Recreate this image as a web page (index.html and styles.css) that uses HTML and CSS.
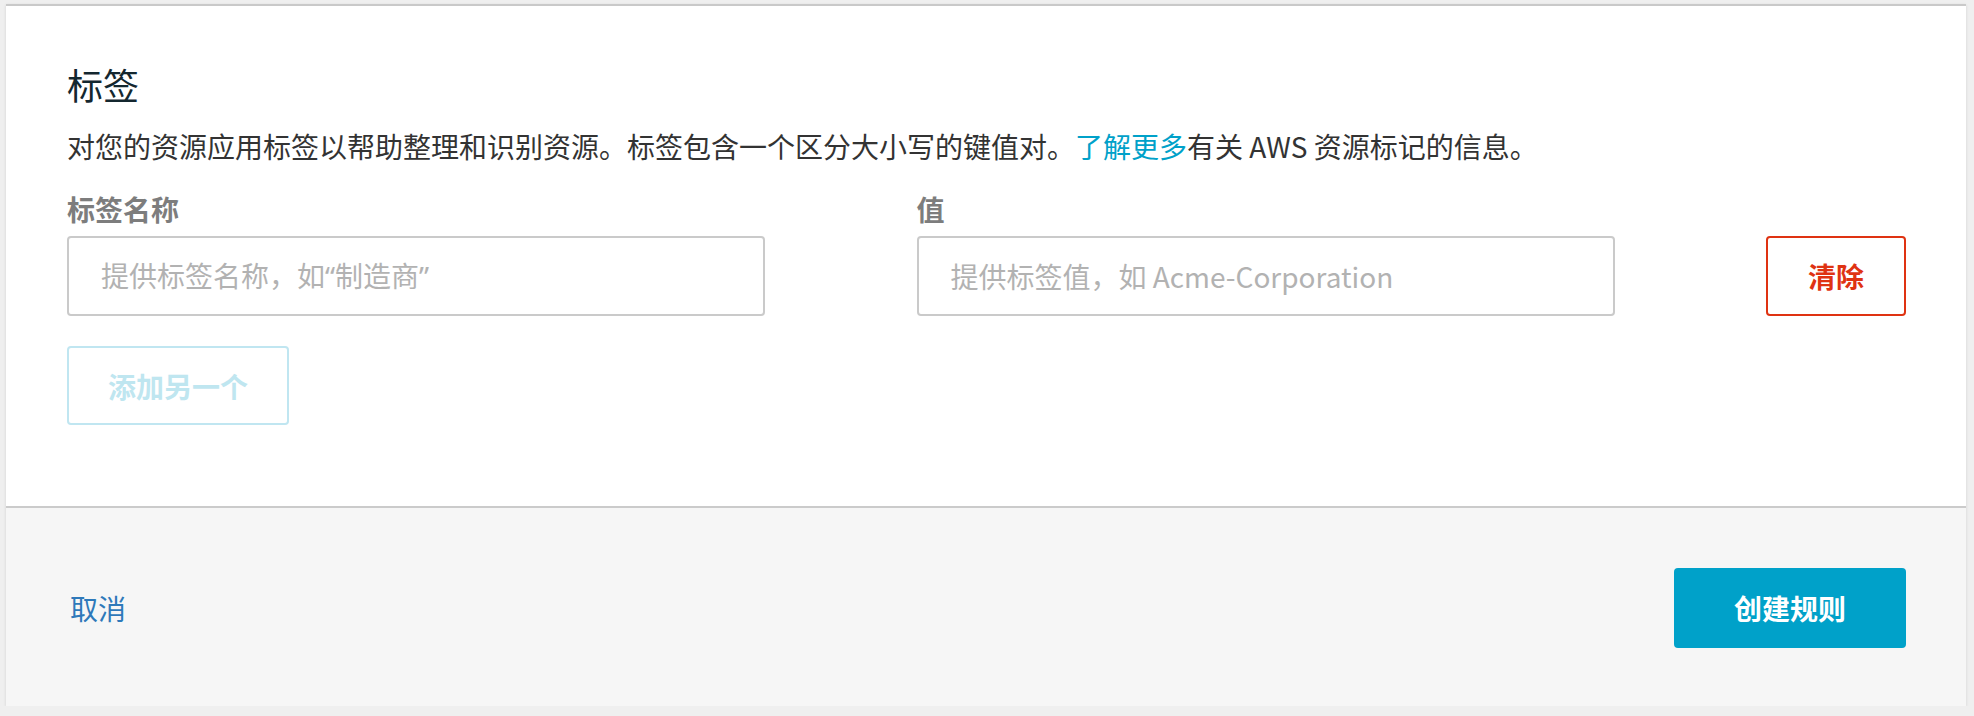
FILE: index.html
```html
<!DOCTYPE html>
<html lang="zh-CN">
<head>
<meta charset="utf-8">
<title>标签</title>
<link rel="stylesheet" href="styles.css">
</head>
<body>
<div class="panel">
  <section class="tags">
    <h2 class="tags-title">标签</h2>
    <p class="tags-desc">对您的资源应用标签以帮助整理和识别资源。标签包含一个区分大小写的键值对。<a class="link" href="#">了解更多</a>有关 AWS 资源标记的信息。</p>
    <div class="tag-row">
      <div class="field">
        <label class="field-label">标签名称</label>
        <input class="field-input field-input-quotes" type="text" placeholder="提供标签名称，如“制造商”">
      </div>
      <div class="field">
        <label class="field-label">值</label>
        <input class="field-input" type="text" placeholder="提供标签值，如 Acme-Corporation">
      </div>
      <div class="field field-action">
        <button class="btn btn-danger" type="button">清除</button>
      </div>
    </div>
    <button class="btn btn-add" type="button" disabled>添加另一个</button>
  </section>
  <footer class="actions">
    <a class="cancel" href="#">取消</a>
    <button class="btn btn-primary" type="button">创建规则</button>
  </footer>
</div>
</body>
</html>
```

FILE: styles.css
```css
* { box-sizing: border-box; }

html, body {
  margin: 0;
  padding: 0;
}

body {
  background: #efefef;
  padding: 4px 8px 0 6px;
  font-family: "Noto Sans CJK SC", "Noto Sans", sans-serif;
  color: #333;
}

.panel {
  background: #fff;
  border-top: 2px solid #c9c9c9;
  box-shadow: 0 1px 3px rgba(0, 0, 0, 0.12);
}

.tags {
  padding: 56px 60px 81px 61px;
}

.tags-title {
  margin: 0;
  font-size: 36px;
  line-height: 44px;
  font-weight: 400;
  color: #14272f;
}

.tags-desc {
  margin: 20px 0 0;
  font-size: 28px;
  line-height: 40px;
  color: #333;
}

.link {
  color: #00a1c9;
  text-decoration: none;
}

.tag-row {
  margin-top: 25px;
  display: flex;
  justify-content: space-between;
  align-items: flex-end;
}

.field {
  width: 698px;
  display: flex;
  flex-direction: column;
}

.field-action {
  width: 140px;
}

.field-label {
  font-size: 28px;
  line-height: 36px;
  font-weight: 700;
  color: #7d7d7d;
  margin-bottom: 9px;
}

.field-input {
  height: 80px;
  width: 100%;
  border: 2px solid #cacaca;
  border-radius: 4px;
  padding: 0 32px;
  font-family: inherit;
  font-size: 28px;
  color: #333;
  background: #fff;
  outline: none;
}

.field-input-quotes {
  font-family: "Noto Sans", "Noto Sans CJK SC", sans-serif;
}

.field-input::placeholder {
  color: #b2b2b2;
}

.btn {
  font-family: inherit;
  font-size: 28px;
  font-weight: 700;
  border-radius: 4px;
  cursor: pointer;
  padding: 0;
}

.btn-danger {
  height: 80px;
  width: 140px;
  background: #fff;
  border: 2px solid #df3312;
  color: #df3312;
}

.btn-add {
  margin-top: 30px;
  height: 79px;
  width: 222px;
  background: #fff;
  border: 2px solid #c0e6f1;
  color: #bfe6f0;
}

.actions {
  background: #f6f6f6;
  border-top: 2px solid #cbcbcb;
  padding: 60px 60px 58px 61px;
  display: flex;
  justify-content: space-between;
  align-items: center;
}

.cancel {
  margin-left: 3px;
  font-size: 28px;
  line-height: 40px;
  color: #2e79ba;
  text-decoration: none;
}

.btn-primary {
  height: 80px;
  width: 232px;
  background: #00a1c9;
  border: none;
  color: #fff;
}
```
